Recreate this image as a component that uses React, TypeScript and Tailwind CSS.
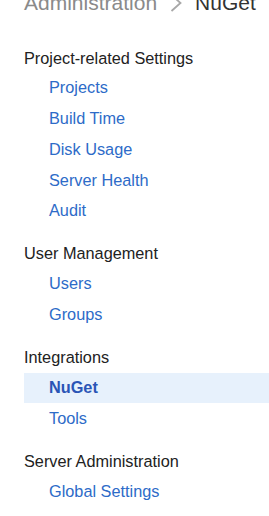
import React from 'react';

type Section = {
    title: string;
    items: string[];
};

const sections: Section[] = [
    {
        title: 'Project-related Settings',
        items: ['Projects', 'Build Time', 'Disk Usage', 'Server Health', 'Audit'],
    },
    { title: 'User Management', items: ['Users', 'Groups'] },
    { title: 'Integrations', items: ['NuGet', 'Tools'] },
    {
        title: 'Server Administration',
        items: ['Global Settings', 'Authentication', 'Email Notifier'],
    },
];

const ACTIVE = 'NuGet';

export default function App() {
    return (
        <div className="min-h-screen overflow-hidden bg-white font-['Liberation_Sans',Arial,sans-serif]">
            {/* breadcrumb title, scrolled partly out of view */}
            <div className="-mt-[13px] flex items-center pl-[24px] text-[21px] whitespace-nowrap">
                <span className="text-[#8a8a8a]">Administration</span>
                <svg
                    className="mx-[13px] shrink-0"
                    width="12"
                    height="18"
                    viewBox="0 0 12 18"
                    fill="none"
                >
                    <path
                        d="M1.5 1 L10.5 9 L1.5 17"
                        stroke="#a8a8a8"
                        strokeWidth="1.8"
                    />
                </svg>
                <span className="text-[#333]">NuGet</span>
            </div>

            <nav className="mt-[29px] pl-[24px]">
                {sections.map((s, i) => (
                    <div key={s.title} className={i > 0 ? 'mt-[16.6px]' : ''}>
                        <div className="mb-[5.6px] text-[16.3px] leading-[20px] text-[#222]">
                            {s.title}
                        </div>
                        <ul>
                            {s.items.map((it) => (
                                <li
                                    key={it}
                                    className={
                                        it === ACTIVE
                                            ? 'h-[30.75px] bg-[#e7f1fc] pl-[25px] pt-[2.4px] text-[16.3px] leading-[24px] font-bold text-[#2a55b6]'
                                            : 'h-[30.75px] pl-[25px] pt-[2.4px] text-[16.3px] leading-[24px] text-[#2d6bc8]'
                                    }
                                >
                                    {it}
                                </li>
                            ))}
                        </ul>
                    </div>
                ))}
            </nav>
        </div>
    );
}
